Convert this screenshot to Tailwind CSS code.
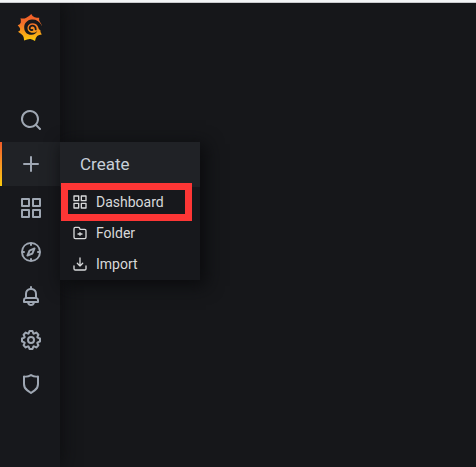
<!DOCTYPE html>
<html lang="en">
<head>
<meta charset="utf-8">
<title>Grafana</title>
<script src="https://cdn.jsdelivr.net/npm/@tailwindcss/browser@4"></script>
</head>
<body class="h-[467px] w-[476px] overflow-hidden bg-[#16171a] font-[Roboto,sans-serif]">
<div class="flex h-full flex-col">
<div class="h-[3px] shrink-0 border-b border-[#c9cacd] bg-[#f3f5f6]"></div>
<div class="relative flex flex-1 overflow-hidden">
  <nav class="flex w-[60px] flex-col bg-[#17181c] text-[#9fa7b3] shadow-[0_0_20px_#0b0c0e]">
    <a class="flex h-[95px] justify-center pt-[11px]">
      <svg class="h-7 w-[26px]" viewBox="0 0 26 28">
        <defs><linearGradient id="g" x1="0" y1="0" x2="0" y2="1"><stop offset="0" stop-color="#f05a28"/><stop offset=".35" stop-color="#f3702a"/><stop offset="1" stop-color="#fbca0a"/></linearGradient></defs>
        <path fill="url(#g)" d="M14.3 0 Q15.6 2.8 17.6 3.3 Q19.8 3.8 22.2 3.8 Q21.6 6.2 23 8 Q24.5 9.8 25 12.5 L23.6 15 Q22.8 17.5 24.8 20.5 Q21.8 20.8 20.2 22 Q18.6 23.5 18 27 Q15.6 25.1 13.4 24.9 Q10.8 24.7 7.1 26.5 Q7 23.3 6 21.8 Q4.8 20.2 1 17.8 Q3.4 17 3.2 15 Q2.8 13.1 .7 11.2 Q3.3 10.5 3.8 8.5 Q4.2 6.5 3.5 4.2 Q6.8 5 8.8 4 Q11.5 2.9 14.3 0Z"/>
        <path fill="#17181c" d="M26 14.5L24.5 11C22.3 7.3 18.7 5.2 14.7 5.6C10 6 7.1 9.5 7.2 13.7C7.3 18 10.4 20.9 14.4 20.8C17.2 20.7 19.4 19.2 20.2 16.9C18.7 18.5 16.8 19.2 14.6 18.7C11.7 18.1 10.2 16 10.5 13.6C10.8 10.8 13 9.1 15.8 9.2C19.4 9.3 21.3 12 21.8 15L23.5 16.5Z"/>
        <path fill="none" stroke="#17181c" stroke-width="1.9" stroke-linecap="round" d="M18.7 15.4C18.8 12.7 17 11.4 15.1 11.6C13.2 11.9 12.4 13.4 12.8 14.8C13.2 16 14.3 16.4 15.4 15.9"/>
      </svg>
    </a>
    <a class="flex h-11 items-center justify-center pl-0.5"><svg class="size-6 fill-current" viewBox="0 0 24 24"><path d="M21.71,20.29,18,16.61A9,9,0,1,0,16.61,18l3.68,3.68a1,1,0,0,0,1.42,0A1,1,0,0,0,21.71,20.29ZM11,18a7,7,0,1,1,7-7A7,7,0,0,1,11,18Z"/></svg></a>
    <a class="relative flex h-11 items-center justify-center bg-[#202226] pl-0.5"><span class="absolute top-0 left-0 h-full w-0.5 bg-linear-to-b from-[#f05a28] to-[#fbca0a]"></span><svg class="size-6 fill-current" viewBox="0 0 24 24"><path d="M19,11H13V5a1,1,0,0,0-2,0v6H5a1,1,0,0,0,0,2h6v6a1,1,0,0,0,2,0V13h6a1,1,0,0,0,0-2Z"/></svg></a>
    <a class="flex h-11 items-center justify-center pl-0.5"><svg class="size-6 fill-current" viewBox="0 0 24 24"><path id="apps" d="M10,13H3a1,1,0,0,0-1,1v7a1,1,0,0,0,1,1h7a1,1,0,0,0,1-1V14A1,1,0,0,0,10,13ZM9,20H4V15H9ZM21,2H14a1,1,0,0,0-1,1v7a1,1,0,0,0,1,1h7a1,1,0,0,0,1-1V3A1,1,0,0,0,21,2ZM20,9H15V4h5Zm1,4H14a1,1,0,0,0-1,1v7a1,1,0,0,0,1,1h7a1,1,0,0,0,1-1V14A1,1,0,0,0,21,13Zm-1,7H15V15h5ZM10,2H3A1,1,0,0,0,2,3v7a1,1,0,0,0,1,1h7a1,1,0,0,0,1-1V3A1,1,0,0,0,10,2ZM9,9H4V4H9Z"/></svg></a>
    <a class="flex h-11 items-center justify-center pl-0.5"><svg class="size-6 fill-current" viewBox="0 0 24 24"><path d="M12,2A10,10,0,1,0,22,12,10,10,0,0,0,12,2Zm1,17.93V19a1,1,0,0,0-2,0v.93A8,8,0,0,1,4.07,13H5a1,1,0,0,0,0-2H4.07A8,8,0,0,1,11,4.07V5a1,1,0,0,0,2,0V4.07A8,8,0,0,1,19.93,11H19a1,1,0,0,0,0,2h.93A8,8,0,0,1,13,19.93ZM15.14,7.55l-5,2.12a1,1,0,0,0-.52.52l-2.12,5a1,1,0,0,0,.21,1.1,1,1,0,0,0,.7.3.93.93,0,0,0,.4-.09l5-2.12a1,1,0,0,0,.52-.52l2.12-5a1,1,0,0,0-1.31-1.31Zm-2.49,5.1-2.28,1,1-2.28,2.28-1Z"/></svg></a>
    <a class="flex h-11 items-center justify-center pl-0.5"><svg class="size-6 fill-current" viewBox="0 0 24 24"><path d="M18,13.18V10a6,6,0,0,0-5-5.91V3a1,1,0,0,0-2,0V4.09A6,6,0,0,0,6,10v3.18A3,3,0,0,0,4,16v2a1,1,0,0,0,1,1H8.14a4,4,0,0,0,7.72,0H19a1,1,0,0,0,1-1V16A3,3,0,0,0,18,13.18ZM8,10a4,4,0,0,1,8,0v3H8Zm4,10a2,2,0,0,1-1.72-1h3.44A2,2,0,0,1,12,20Zm6-3H6V16a1,1,0,0,1,1-1H17a1,1,0,0,1,1,1Z"/></svg></a>
    <a class="flex h-11 items-center justify-center pl-0.5"><svg class="size-6 fill-current" viewBox="0 0 24 24"><path d="M21.32,9.55l-1.89-.63.89-1.78A1,1,0,0,0,20.13,6L18,3.87a1,1,0,0,0-1.15-.19l-1.78.89-.63-1.89A1,1,0,0,0,13.5,2h-3a1,1,0,0,0-.95.68L8.92,4.57,7.14,3.68A1,1,0,0,0,6,3.87L3.87,6a1,1,0,0,0-.19,1.15l.89,1.78-1.89.63A1,1,0,0,0,2,10.5v3a1,1,0,0,0,.68.95l1.89.63-.89,1.78A1,1,0,0,0,3.87,18L6,20.13a1,1,0,0,0,1.15.19l1.78-.89.63,1.89a1,1,0,0,0,.95.68h3a1,1,0,0,0,.95-.68l.63-1.89,1.78.89A1,1,0,0,0,18,20.13L20.13,18a1,1,0,0,0,.19-1.15l-.89-1.78,1.89-.63A1,1,0,0,0,22,13.5v-3A1,1,0,0,0,21.32,9.55ZM20,12.78l-1.2.4A2,2,0,0,0,17.64,16l.57,1.14-1.1,1.1L16,17.64a2,2,0,0,0-2.79,1.16l-.4,1.2H11.22l-.4-1.2A2,2,0,0,0,8,17.64l-1.14.57-1.1-1.1L6.36,16A2,2,0,0,0,5.2,13.18L4,12.78V11.22l1.2-.4A2,2,0,0,0,6.36,8L5.79,6.89l1.1-1.1L8,6.36A2,2,0,0,0,10.82,5.2l.4-1.2h1.56l.4,1.2A2,2,0,0,0,16,6.36l1.14-.57,1.1,1.1L17.64,8a2,2,0,0,0,1.16,2.79l1.2.4ZM12,8a4,4,0,1,0,4,4A4,4,0,0,0,12,8Zm0,6a2,2,0,1,1,2-2A2,2,0,0,1,12,14Z"/></svg></a>
    <a class="flex h-11 items-center justify-center pl-0.5"><svg class="size-6 fill-current" viewBox="0 0 24 24"><path d="M19.63,3.65a1,1,0,0,0-.84-.2,8,8,0,0,1-6.22-1.27,1,1,0,0,0-1.14,0A8,8,0,0,1,5.21,3.45a1,1,0,0,0-.84.2A1,1,0,0,0,4,4.43v7.45a9,9,0,0,0,3.77,7.33l3.65,2.6a1,1,0,0,0,1.16,0l3.65-2.6A9,9,0,0,0,20,11.88V4.43A1,1,0,0,0,19.63,3.65ZM18,11.88a7,7,0,0,1-2.93,5.7L12,19.77,8.93,17.58A7,7,0,0,1,6,11.88V5.58a10,10,0,0,0,6-1.39,10,10,0,0,0,6,1.39Z"/></svg></a>
  </nav>
  <main class="flex-1"></main>
  <div class="absolute top-[139px] left-[60px] h-[138px] w-[140px] bg-[#17181c] text-sm text-[#d8d9da] shadow-[4px_4px_16px_2px_#0b0c0e]">
    <div class="flex h-[45px] items-center bg-[#202226] pl-5 text-[17px] text-[#c7d0d9]">Create</div>
    <div class="-mt-px flex h-[31px] items-center gap-2 pl-3"><svg class="size-4 fill-current" viewBox="0 0 24 24"><use href="#apps"/></svg>Dashboard</div>
    <div class="flex h-[31px] items-center gap-2 pl-3"><svg class="size-4 fill-current" viewBox="0 0 24 24"><path d="M19,5.5H12.72l-.32-1a3,3,0,0,0-2.84-2H5a3,3,0,0,0-3,3v13a3,3,0,0,0,3,3H19a3,3,0,0,0,3-3V8.5A3,3,0,0,0,19,5.5Zm1,13a1,1,0,0,1-1,1H5a1,1,0,0,1-1-1V5.5a1,1,0,0,1,1-1H9.56a1,1,0,0,1,.95.68l.54,1.64A1,1,0,0,0,12,7.5h7a1,1,0,0,1,1,1Zm-5-6H13v-1a1,1,0,0,0-2,0v1H9a1,1,0,0,0,0,2h2v1a1,1,0,0,0,2,0v-1h2a1,1,0,0,0,0-2Z"/></svg>Folder</div>
    <div class="flex h-[31px] items-center gap-2 pl-3"><svg class="size-4 fill-current" viewBox="0 0 24 24"><path d="M21,14a1,1,0,0,0-1,1v4a1,1,0,0,1-1,1H5a1,1,0,0,1-1-1V15a1,1,0,0,0-2,0v4a3,3,0,0,0,3,3H19a3,3,0,0,0,3-3V15A1,1,0,0,0,21,14Zm-9.71,1.71a1,1,0,0,0,.33.21.94.94,0,0,0,.76,0,1,1,0,0,0,.33-.21l4-4a1,1,0,0,0-1.42-1.42L13,12.59V3a1,1,0,0,0-2,0v9.59l-2.29-2.3a1,1,0,1,0-1.42,1.42Z"/></svg>Import</div>
    <div class="absolute top-[41px] left-px h-[38px] w-[131px] border-[7px] border-[#fd3635]"></div>
  </div>
</div>
</div>
</body>
</html>
